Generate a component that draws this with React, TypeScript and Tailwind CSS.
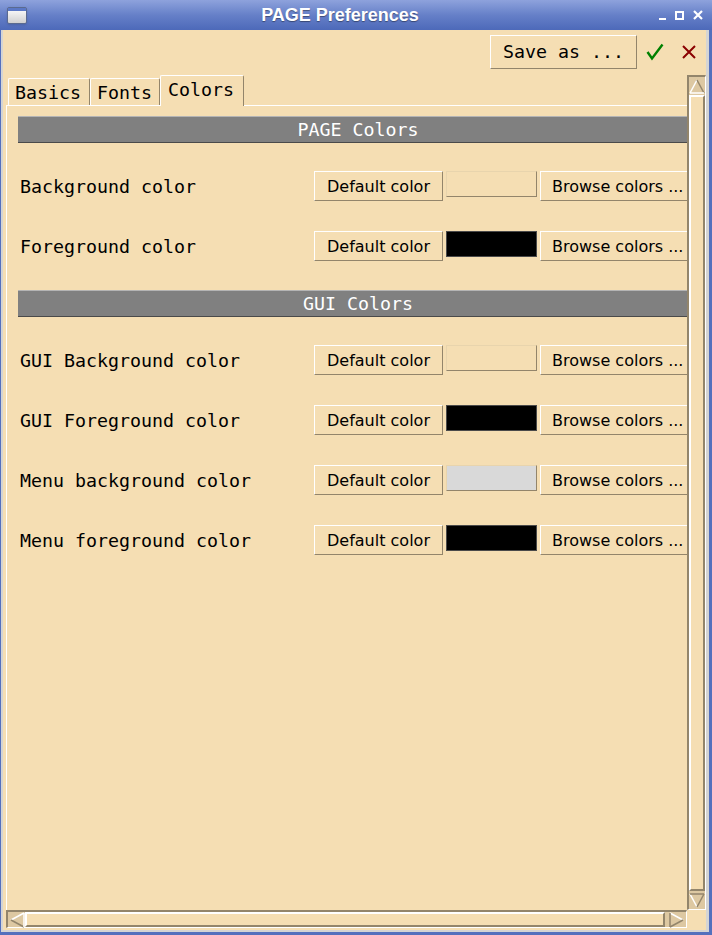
import React from 'react';

const mono = { fontFamily: '"DejaVu Sans Mono", "Liberation Mono", monospace' };
const sans = { fontFamily: '"DejaVu Sans", "Liberation Sans", sans-serif' };

function Arrow({ dir }: { dir: 'up' | 'down' | 'left' | 'right' }) {
  const pts = {
    up: { a: '8,2 1,15', b: '8,2 15,15', c: '1,15 15,15' },
    down: { a: '1,2 8,15', b: '15,2 8,15', c: '1,2 15,2' },
    left: { a: '2,8 15,1', b: '2,8 15,15', c: '15,1 15,15' },
    right: { a: '2,1 15,8', b: '2,15 15,8', c: '2,1 2,15' },
  }[dir];
  const third = dir === 'up' || dir === 'left' ? '#ffffff' : '#93856b';
  return (
    <svg width="16" height="16" viewBox="0 0 16 16">
      <polyline points={pts.a} fill="none" stroke="#ffffff" strokeWidth="1.5" />
      <polyline points={pts.b} fill="none" stroke="#93856b" strokeWidth="1.5" />
      <polyline points={pts.c} fill="none" stroke={third} strokeWidth="1.5" />
    </svg>
  );
}

function Row({ label, swatch }: { label: string; swatch: string }) {
  return (
    <div className="flex items-start h-[30px]">
      <div className="w-[296px] pl-[2px] h-[30px] pt-px flex items-center text-[18.3px] text-black" style={mono}>
        {label}
      </div>
      <button
        className="w-[129px] h-[30px] bg-[#f5deb3] border border-t-white border-l-white border-r-[#93856b] border-b-[#93856b] text-[16px] text-black shrink-0 pt-px"
        style={sans}
      >
        Default color
      </button>
      <div
        className={`ml-[3px] w-[91px] h-[26px] shrink-0 border ${
          swatch === '#000000' ? 'border-[#4a4a4a]' : 'border-t-[#e8d4ad] border-l-[#e8d4ad] border-r-[#93856b] border-b-[#93856b]'
        }`}
        style={{ backgroundColor: swatch }}
      />
      <button
        className="ml-[3px] w-[158px] h-[30px] bg-[#f5deb3] border border-t-white border-l-white border-r-[#93856b] border-b-[#93856b] text-[16px] text-black text-left pl-[11px] shrink-0 pt-px"
        style={sans}
      >
        Browse colors ...
      </button>
    </div>
  );
}

function Header({ title }: { title: string }) {
  return (
    <div
      className="h-[27px] bg-[#808080] border-t border-t-[#b4b4b4] border-b border-b-[#4a4a4a] flex items-center justify-center text-white text-[18.3px]"
      style={mono}
    >
      {title}
    </div>
  );
}

export default function App() {
  return (
    <div className="w-[712px] h-[935px] bg-[#5470bd] flex flex-col overflow-hidden">
      {/* Title bar */}
      <div className="h-[30px] shrink-0 relative flex items-center justify-center pl-[30px] pr-[62px] bg-gradient-to-b from-[#8ea2dc] via-[#6680c8] to-[#4d69b9]">
        <div className="absolute left-[7px] top-[7px] w-[20px] h-[17px] rounded-[2px] border border-[#5a6a90] bg-gradient-to-b from-white to-[#d0d0d0] shadow-sm">
          <div className="h-[3px] bg-[#5b78c6]" />
        </div>
        <span
          className="text-white text-[18px] font-bold [text-shadow:0_1px_1px_rgba(0,0,0,0.4)]"
          style={{ fontFamily: '"Liberation Sans", Arial, sans-serif' }}
        >
          PAGE Preferences
        </span>
        <div className="absolute right-[9px] top-[10px] flex items-center gap-[9px]">
          <div className="w-[7px] h-[10px] flex items-end">
            <div className="w-[7px] h-[2px] bg-white" />
          </div>
          <div className="w-[9px] h-[9px] border-2 border-white" />
          <svg width="10" height="10" viewBox="0 0 10 10">
            <path d="M1 1 L9 9 M9 1 L1 9" stroke="white" strokeWidth="2.2" />
          </svg>
        </div>
      </div>

      {/* Window body */}
      <div className="flex-1 flex flex-col ml-[1px] mr-[3px] mb-[3px] border-l-2 border-r-[3px] border-b-2 border-[#d4d4d4] bg-[#f5deb3] min-h-0">
        {/* Toolbar */}
        <div className="h-[45px] shrink-0 flex justify-end items-start pt-[5px]">
          <button
            className="w-[147px] h-[34px] bg-[#f5deb3] border border-t-white border-l-white border-r-[#93856b] border-b-[#93856b] text-[18.3px] text-black"
            style={mono}
          >
            Save as ...
          </button>
          <div className="w-[35px] h-[34px] flex items-center justify-center">
            <svg width="18" height="18" viewBox="0 0 18 18">
              <path d="M1.5 9 L6 15.5 L16.5 1.5" fill="none" stroke="#008000" strokeWidth="2.4" />
            </svg>
          </div>
          <div className="w-[34px] h-[34px] flex items-center justify-center">
            <svg width="14" height="14" viewBox="0 0 14 14">
              <path d="M1 1 L13 13 M13 1 L1 13" stroke="#8b0000" strokeWidth="2" />
            </svg>
          </div>
        </div>

        {/* Scrolled frame */}
        <div className="flex-1 min-h-0 ml-[3px] mb-[2px] grid grid-cols-[1fr_19px] grid-rows-[1fr_18px]">
          <div className="overflow-hidden flex flex-col min-h-0">
            {/* Tabs */}
            <div className="h-[30px] shrink-0 flex items-end pl-[2px] text-[18.3px] text-black" style={mono}>
              <div className="w-[82px] h-[27px] border-t border-l border-t-white border-l-white border-r border-r-[#93856b] rounded-t-[2px] pl-[6px] leading-[27px]">
                Basics
              </div>
              <div className="w-[70px] h-[27px] border-t border-l border-t-white border-l-white border-r border-r-[#93856b] rounded-t-[2px] pl-[6px] leading-[27px]">
                Fonts
              </div>
              <div className="relative z-10 -mb-px w-[84px] h-[31px] bg-[#f5deb3] border-t border-l border-t-white border-l-white border-r border-r-[#93856b] rounded-t-[2px] pl-[7px] leading-[27px]">
                Colors
              </div>
            </div>
            {/* Panel */}
            <div className="flex-1 border-t border-l border-white pl-[11px] pt-[10px]">
              <div className="w-[680px]">
                <Header title="PAGE Colors" />
                <div className="mt-[28px] flex flex-col gap-[30px]">
                  <Row label="Background color" swatch="#f5deb3" />
                  <Row label="Foreground color" swatch="#000000" />
                </div>
                <div className="mt-[29px]">
                  <Header title="GUI Colors" />
                </div>
                <div className="mt-[28px] flex flex-col gap-[30px]">
                  <Row label="GUI Background color" swatch="#f5deb3" />
                  <Row label="GUI Foreground color" swatch="#000000" />
                  <Row label="Menu background color" swatch="#d9d9d9" />
                  <Row label="Menu foreground color" swatch="#000000" />
                </div>
              </div>
            </div>
          </div>

          {/* Vertical scrollbar */}
          <div className="flex flex-col bg-[#ddc8a2] border-l-2 border-t-2 border-l-[#93856b] border-t-[#93856b] border-r border-b border-r-white border-b-white">
            <div className="h-[18px] shrink-0 flex items-center justify-center">
              <Arrow dir="up" />
            </div>
            <div className="flex-1 bg-[#f5deb3] border-2 border-t-white border-l-white border-r-[#93856b] border-b-[#93856b]" />
            <div className="h-[18px] shrink-0 flex items-center justify-center">
              <Arrow dir="down" />
            </div>
          </div>

          {/* Horizontal scrollbar */}
          <div className="flex bg-[#ddc8a2] border-l-2 border-t-2 border-l-[#93856b] border-t-[#93856b] border-r border-b border-r-white border-b-white">
            <div className="w-[17px] shrink-0 flex items-center justify-center">
              <Arrow dir="left" />
            </div>
            <div className="flex-1 bg-[#f5deb3] border-2 border-t-white border-l-white border-r-[#93856b] border-b-[#93856b]" />
            <div className="w-[21px] shrink-0 flex items-center justify-center">
              <Arrow dir="right" />
            </div>
          </div>

          {/* Corner */}
          <div className="bg-[#f5deb3]" />
        </div>
      </div>
    </div>
  );
}
